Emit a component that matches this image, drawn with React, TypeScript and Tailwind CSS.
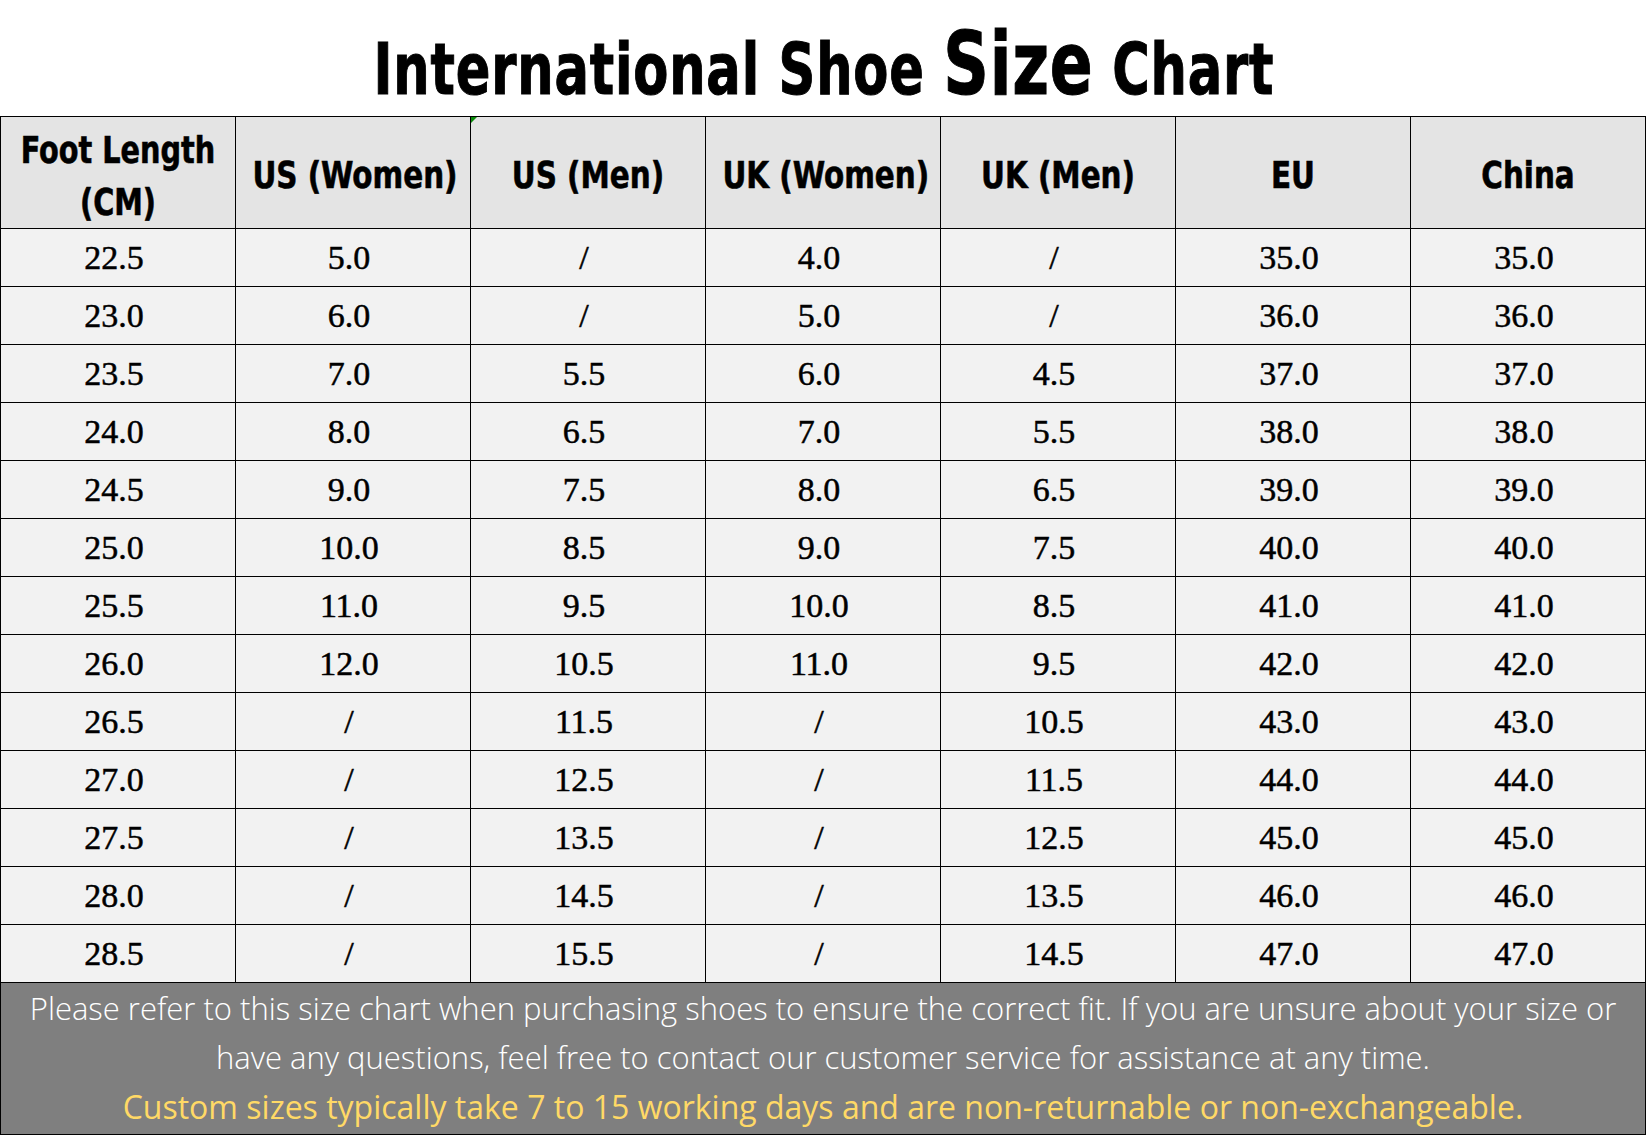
const headers = ['US (Women)', 'US (Men)', 'UK (Women)', 'UK (Men)', 'EU', 'China'];

const rows: string[][] = [
  ['22.5', '5.0', '/', '4.0', '/', '35.0', '35.0'],
  ['23.0', '6.0', '/', '5.0', '/', '36.0', '36.0'],
  ['23.5', '7.0', '5.5', '6.0', '4.5', '37.0', '37.0'],
  ['24.0', '8.0', '6.5', '7.0', '5.5', '38.0', '38.0'],
  ['24.5', '9.0', '7.5', '8.0', '6.5', '39.0', '39.0'],
  ['25.0', '10.0', '8.5', '9.0', '7.5', '40.0', '40.0'],
  ['25.5', '11.0', '9.5', '10.0', '8.5', '41.0', '41.0'],
  ['26.0', '12.0', '10.5', '11.0', '9.5', '42.0', '42.0'],
  ['26.5', '/', '11.5', '/', '10.5', '43.0', '43.0'],
  ['27.0', '/', '12.5', '/', '11.5', '44.0', '44.0'],
  ['27.5', '/', '13.5', '/', '12.5', '45.0', '45.0'],
  ['28.0', '/', '14.5', '/', '13.5', '46.0', '46.0'],
  ['28.5', '/', '15.5', '/', '14.5', '47.0', '47.0'],
];

const condensed = "font-['DejaVu_Sans_Condensed','DejaVu_Sans',sans-serif] font-bold";

export default function App() {
  return (
    <div className="w-[1647px] bg-white">
      {/* title */}
      <div className="flex h-[116px] items-end justify-center pb-[8px]">
        <h1 className={`${condensed} inline-block origin-center scale-x-[0.8] whitespace-nowrap text-[71px] leading-none tracking-[1px] text-black [-webkit-text-stroke:1px_black]`}>
          International Shoe <span className="text-[88px]">Size</span> Chart
        </h1>
      </div>

      <table className="w-[1646px] table-fixed border-collapse border border-black">
        <thead>
          <tr className="h-[112px] bg-[#e4e4e4]">
            <th className="border border-black p-0 pt-[6px] align-middle">
              <div className={`${condensed} scale-x-[0.84] text-[38px] leading-[52px] text-black [-webkit-text-stroke:0.6px_black]`}>
                Foot Length
                <br />
                (CM)
              </div>
            </th>
            {headers.map((h, i) => (
              <th key={h} className="relative border border-black p-0 pt-[4px] align-middle">
                {i === 1 && (
                  <span className="absolute left-0 top-0 h-0 w-0 border-r-[6px] border-t-[6px] border-r-transparent border-t-[#0a8a0a]" />
                )}
                <div className={`${condensed} scale-x-[0.86] whitespace-nowrap text-[38px] leading-none text-black [-webkit-text-stroke:0.6px_black]`}>{h}</div>
              </th>
            ))}
          </tr>
        </thead>
        <tbody>
          {rows.map((r) => (
            <tr key={r[0]} className="h-[58px] bg-[#f2f2f2]">
              {r.map((c, j) => (
                <td
                  key={j}
                  className="border border-black p-0 pr-[8px] text-center align-middle font-['Liberation_Serif','Times_New_Roman',serif] text-[34px] leading-none text-black [-webkit-text-stroke:0.5px_black]"
                >
                  {c}
                </td>
              ))}
            </tr>
          ))}
          <tr className="bg-[#7f7f7f]">
            <td
              colSpan={7}
              className="h-[152px] border border-black px-2 pb-[2px] text-center align-middle font-['Open_Sans','Noto_Sans',sans-serif] text-[31px] font-light leading-[49px]"
            >
              <p className="text-white">
                Please refer to this size chart when purchasing shoes to ensure the correct fit. If you are unsure about your size or
                <br />
                have any questions, feel free to contact our customer service for assistance at any time.
              </p>
              <p className="text-[32px] font-normal text-[#ffd966]">
                Custom sizes typically take 7 to 15 working days and are non-returnable or non-exchangeable.
              </p>
            </td>
          </tr>
        </tbody>
      </table>
    </div>
  );
}
